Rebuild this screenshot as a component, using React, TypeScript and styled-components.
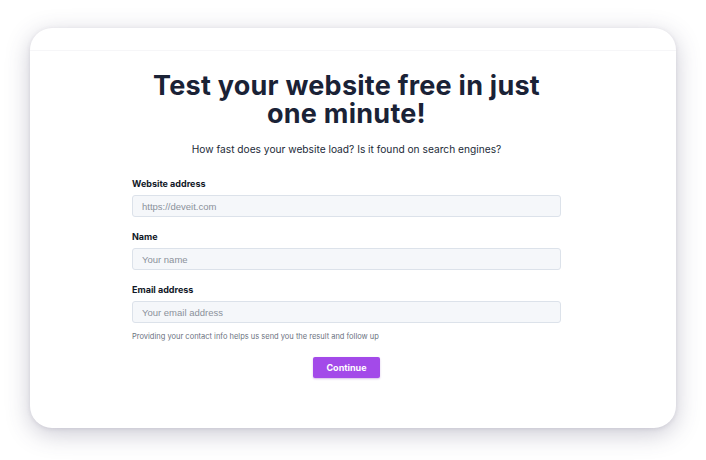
import * as React from "react";
import styled, { createGlobalStyle } from "styled-components";

const GlobalStyle = createGlobalStyle`
  html, body {
    margin: 0;
    padding: 0;
    background: #ffffff;
  }
  body {
    font-family: Inter, "Noto Sans", sans-serif;
    color: #1a2233;
  }
`;

const Page = styled.div`
  padding: 28px 30px 32px 30px;
  box-sizing: border-box;
  width: 706px;
  height: 460px;
`;

const Card = styled.div`
  height: 400px;
  background: #ffffff;
  border-radius: 22px;
  box-shadow: 0 6px 24px rgba(70, 66, 100, 0.28), 0 1px 4px rgba(70, 66, 100, 0.12);
  overflow: hidden;
  display: flex;
  flex-direction: column;
`;

const CardHeader = styled.div`
  height: 22px;
  border-bottom: 1px solid #f6f6f8;
  flex-shrink: 0;
`;

const Content = styled.div`
  display: flex;
  flex-direction: column;
  align-items: center;
  padding: 21px 13px 0 0;
`;

const Title = styled.h1`
  margin: 0;
  font-family: Inter, "Noto Sans", sans-serif;
  font-weight: 700;
  font-size: 27px;
  line-height: 28px;
  letter-spacing: 0.25px;
  text-align: center;
  color: #1a2236;
  width: 420px;
`;

const Subtitle = styled.p`
  margin: 15px 0 0 0;
  font-size: 10.2px;
  color: #222a38;
  text-align: center;
`;

const Form = styled.form`
  width: 429px;
  margin-top: 23px;
  display: flex;
  flex-direction: column;
`;

const Field = styled.div`
  display: flex;
  flex-direction: column;
  margin-bottom: 14px;
`;

const Label = styled.label`
  font-size: 9px;
  font-weight: 700;
  color: #111827;
  margin-bottom: 6px;
`;

const Input = styled.input`
  height: 22px;
  box-sizing: border-box;
  border: 1px solid #dce2ea;
  border-radius: 3px;
  background: #f5f7fa;
  padding: 0 9px;
  font-family: "Liberation Sans", Arial, sans-serif;
  font-size: 9.5px;
  color: #333;
  outline: none;
  &::placeholder {
    color: #8b919a;
  }
`;

const Helper = styled.p`
  margin: -5px 0 0 0;
  font-size: 7.5px;
  color: #6b7280;
`;

const ButtonRow = styled.div`
  display: flex;
  justify-content: center;
  margin-top: 16px;
`;

const Button = styled.button`
  width: 67px;
  height: 21px;
  border: none;
  border-radius: 2px;
  background: #a34ae9;
  color: #ffffff;
  font-family: Inter, "Noto Sans", sans-serif;
  font-weight: 700;
  font-size: 9px;
  cursor: pointer;
  box-shadow: 0 1px 2px rgba(120, 40, 180, 0.3);
`;

const fields = [
  { id: "website", label: "Website address", placeholder: "https://deveit.com" },
  { id: "name", label: "Name", placeholder: "Your name" },
  { id: "email", label: "Email address", placeholder: "Your email address" },
];

export default function App() {
  return (
    <>
      <GlobalStyle />
      <Page>
        <Card>
          <CardHeader />
          <Content>
            <Title>Test your website free in just one minute!</Title>
            <Subtitle>How fast does your website load? Is it found on search engines?</Subtitle>
            <Form onSubmit={e => e.preventDefault()}>
              {fields.map(f => (
                <Field key={f.id}>
                  <Label htmlFor={f.id}>{f.label}</Label>
                  <Input id={f.id} placeholder={f.placeholder} />
                </Field>
              ))}
              <Helper>Providing your contact info helps us send you the result and follow up</Helper>
              <ButtonRow>
                <Button type="submit">Continue</Button>
              </ButtonRow>
            </Form>
          </Content>
        </Card>
      </Page>
    </>
  );
}
